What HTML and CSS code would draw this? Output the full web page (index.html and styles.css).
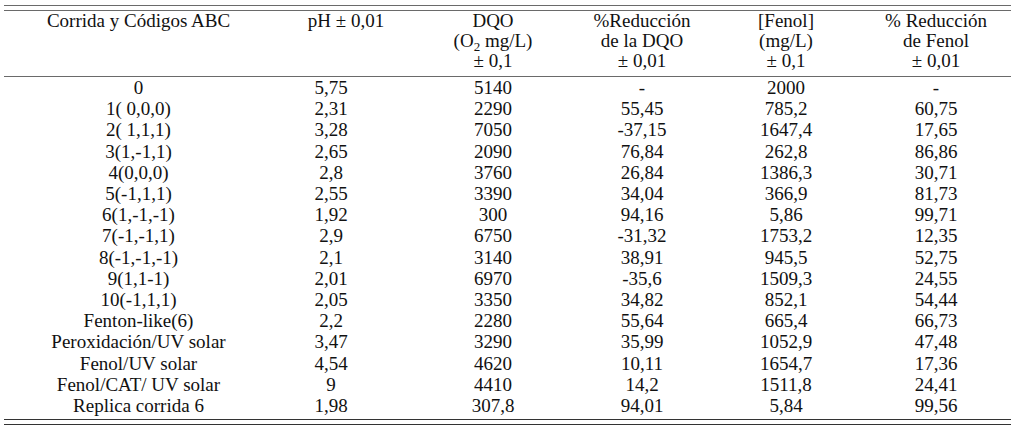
FILE: index.html
```html
<!DOCTYPE html>
<html lang="es">
<head>
<meta charset="utf-8">
<title>Tabla de resultados</title>
<link rel="stylesheet" href="styles.css">
</head>
<body>
<div class="table">
  <div class="rules-top"></div>
  <div class="row head">
    <div class="c">Corrida y Códigos ABC</div>
    <div class="c c-ph">pH ± 0,01</div>
    <div class="c c-dqo">DQO<br>(O<sub class="sub">2</sub> mg/L)<br>± 0,1</div>
    <div class="c">%Reducción<br>de la DQO<br>± 0,01</div>
    <div class="c">[Fenol]<br>(mg/L)<br>± 0,1</div>
    <div class="c">% Reducción<br>de Fenol<br>± 0,01</div>
  </div>
  <div class="body">
    <div class="row"><div class="c">0</div><div class="c">5,75</div><div class="c c-dqo">5140</div><div class="c">-</div><div class="c">2000</div><div class="c">-</div></div>
    <div class="row"><div class="c">1( 0,0,0)</div><div class="c">2,31</div><div class="c c-dqo">2290</div><div class="c">55,45</div><div class="c">785,2</div><div class="c">60,75</div></div>
    <div class="row"><div class="c">2( 1,1,1)</div><div class="c">3,28</div><div class="c c-dqo">7050</div><div class="c">-37,15</div><div class="c">1647,4</div><div class="c">17,65</div></div>
    <div class="row"><div class="c">3(1,-1,1)</div><div class="c">2,65</div><div class="c c-dqo">2090</div><div class="c">76,84</div><div class="c">262,8</div><div class="c">86,86</div></div>
    <div class="row"><div class="c">4(0,0,0)</div><div class="c">2,8</div><div class="c c-dqo">3760</div><div class="c">26,84</div><div class="c">1386,3</div><div class="c">30,71</div></div>
    <div class="row"><div class="c">5(-1,1,1)</div><div class="c">2,55</div><div class="c c-dqo">3390</div><div class="c">34,04</div><div class="c">366,9</div><div class="c">81,73</div></div>
    <div class="row"><div class="c">6(1,-1,-1)</div><div class="c">1,92</div><div class="c c-dqo">300</div><div class="c">94,16</div><div class="c">5,86</div><div class="c">99,71</div></div>
    <div class="row"><div class="c">7(-1,-1,1)</div><div class="c">2,9</div><div class="c c-dqo">6750</div><div class="c">-31,32</div><div class="c">1753,2</div><div class="c">12,35</div></div>
    <div class="row"><div class="c">8(-1,-1,-1)</div><div class="c">2,1</div><div class="c c-dqo">3140</div><div class="c">38,91</div><div class="c">945,5</div><div class="c">52,75</div></div>
    <div class="row"><div class="c">9(1,1-1)</div><div class="c">2,01</div><div class="c c-dqo">6970</div><div class="c">-35,6</div><div class="c">1509,3</div><div class="c">24,55</div></div>
    <div class="row"><div class="c">10(-1,1,1)</div><div class="c">2,05</div><div class="c c-dqo">3350</div><div class="c">34,82</div><div class="c">852,1</div><div class="c">54,44</div></div>
    <div class="row"><div class="c">Fenton-like(6)</div><div class="c">2,2</div><div class="c c-dqo">2280</div><div class="c">55,64</div><div class="c">665,4</div><div class="c">66,73</div></div>
    <div class="row"><div class="c">Peroxidación/UV solar</div><div class="c">3,47</div><div class="c c-dqo">3290</div><div class="c">35,99</div><div class="c">1052,9</div><div class="c">47,48</div></div>
    <div class="row"><div class="c">Fenol/UV solar</div><div class="c">4,54</div><div class="c c-dqo">4620</div><div class="c">10,11</div><div class="c">1654,7</div><div class="c">17,36</div></div>
    <div class="row"><div class="c">Fenol/CAT/ UV solar</div><div class="c">9</div><div class="c c-dqo">4410</div><div class="c">14,2</div><div class="c">1511,8</div><div class="c">24,41</div></div>
    <div class="row"><div class="c">Replica corrida 6</div><div class="c">1,98</div><div class="c c-dqo">307,8</div><div class="c">94,01</div><div class="c">5,84</div><div class="c">99,56</div></div>
  </div>
  <div class="rules-bottom"></div>
</div>
</body>
</html>
```

FILE: styles.css
```css
html, body {
  margin: 0;
  padding: 0;
  background: #ffffff;
}

body {
  font-family: "Liberation Serif", "Times New Roman", serif;
  font-size: 19px;
  color: #111;
}

.table {
  margin-left: 4px;
  width: 1007px;
  padding-top: 5px;
}

.rules-top {
  height: 4px;
  border-top: 1px solid #6a6a6a;
  border-bottom: 1px solid #6a6a6a;
}

.row {
  display: grid;
  grid-template-columns: 269px 116px 184px 138px 150px 150px;
  line-height: 21.2px;
}

.head {
  line-height: 20px;
  padding-bottom: 5px;
  border-bottom: 1px solid #6a6a6a;
}

.c {
  text-align: center;
  white-space: nowrap;
}

.head .c-ph {
  padding-left: 30px;
}

.c-dqo {
  padding-left: 24px;
}

.sub {
  font-size: 13px;
  line-height: 0;
  vertical-align: -4px;
}

.rules-bottom {
  margin-top: 3px;
  height: 4px;
  border-top: 1px solid #333;
  border-bottom: 1px solid #333;
}
```
